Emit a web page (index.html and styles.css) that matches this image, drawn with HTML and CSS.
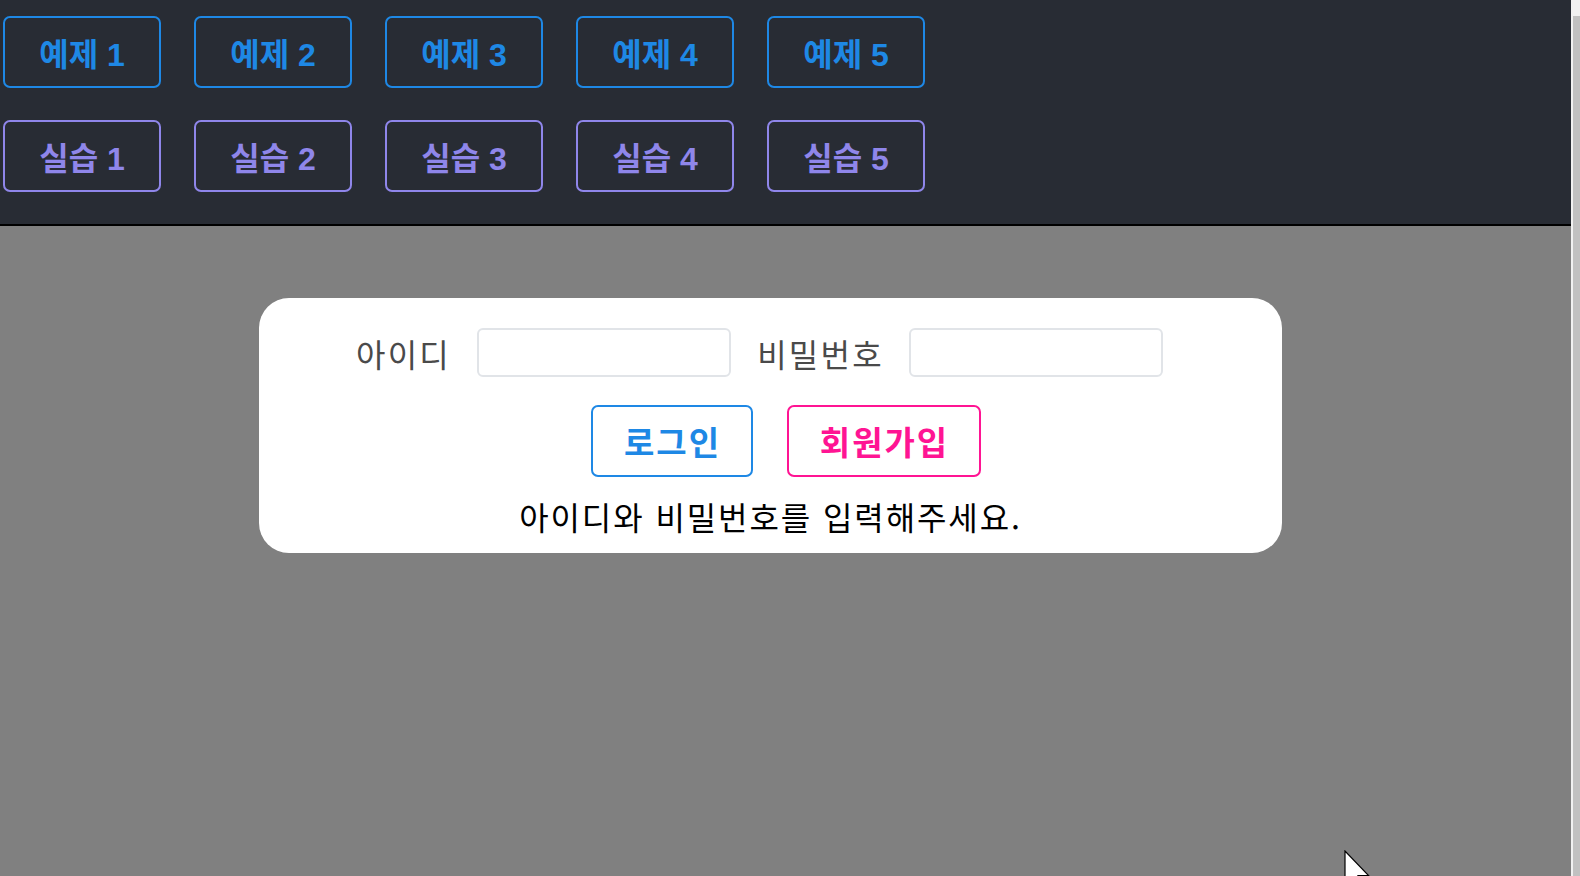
FILE: index.html
```html
<!DOCTYPE html>
<html lang="ko">
<head>
<meta charset="utf-8">
<title>로그인</title>
<link rel="stylesheet" href="styles.css">
</head>
<body>
<div class="page">
  <header class="header">
    <nav class="btn-grid">
      <button class="nav-btn ex">예제 1</button>
      <button class="nav-btn ex">예제 2</button>
      <button class="nav-btn ex">예제 3</button>
      <button class="nav-btn ex">예제 4</button>
      <button class="nav-btn ex">예제 5</button>
      <button class="nav-btn pr">실습 1</button>
      <button class="nav-btn pr">실습 2</button>
      <button class="nav-btn pr">실습 3</button>
      <button class="nav-btn pr">실습 4</button>
      <button class="nav-btn pr">실습 5</button>
    </nav>
  </header>
  <main class="main">
    <section class="card">
      <div class="field-row">
        <label class="field-label">아이디</label>
        <input class="field-input first" type="text">
        <label class="field-label">비밀번호</label>
        <input class="field-input second" type="password">
      </div>
      <div class="action-row">
        <button class="act-btn login">로그인</button>
        <button class="act-btn join">회원가입</button>
      </div>
      <p class="message">아이디와 비밀번호를 입력해주세요.</p>
    </section>
    <svg class="cursor" width="28" height="44" viewBox="0 0 14 22"><path d="M0.5 0.5 L0.5 17.5 L4.5 13.7 L7.2 20.3 L9.6 19.3 L7 12.8 L12.3 12.8 Z" fill="#fff" stroke="#000" stroke-width="0.6"/></svg>
  </main>
</div>
<div class="scrollbar"><div class="thumb"></div></div>
</body>
</html>
```
FILE: styles.css
```css
html, body {
  margin: 0;
  padding: 0;
  height: 100%;
}
body {
  display: flex;
  font-family: "Liberation Sans", "Noto Sans CJK KR", sans-serif;
  overflow: hidden;
}
.page {
  width: 1571px;
  display: flex;
  flex-direction: column;
  height: 876px;
  overflow: hidden;
}
.header {
  background: #282c34;
  padding: 16px 0 32px 3px;
  border-bottom: 2px solid #000;
}
.btn-grid {
  display: grid;
  grid-template-columns: repeat(5, 158px);
  grid-auto-rows: 72px;
  gap: 32px 33px;
}
.nav-btn {
  background: transparent;
  border: 2px solid;
  border-radius: 7px;
  font-family: "Liberation Sans", "Noto Sans CJK KR", sans-serif;
  font-weight: 700;
  font-size: 32px;
  padding: 0;
  margin: 0;
}
.nav-btn.ex {
  color: #1e88e5;
  border-color: #1e88e5;
}
.nav-btn.pr {
  color: #8f86ea;
  border-color: #8f86ea;
}
.main {
  flex: 1;
  background: #808080;
  position: relative;
  padding-top: 72px;
}
.card {
  background: #fff;
  width: 1023px;
  margin-left: 259px;
  border-radius: 30px;
  padding: 30px 0 17px;
  display: flex;
  flex-direction: column;
  align-items: center;
}
.field-row {
  display: flex;
  align-items: center;
  height: 49px;
}
.field-label {
  font-family: "Noto Sans CJK KR", sans-serif;
  font-size: 32px;
  color: #4a4a4a;
  letter-spacing: 2.3px;
}
.field-input {
  width: 254px;
  height: 49px;
  box-sizing: border-box;
  border: 2px solid #e1e4e8;
  border-radius: 6px;
  margin: 0;
}
.field-input.first {
  margin: 0 26px 0 26px;
}
.field-input.second {
  margin: 0 22px 0 25px;
}
.action-row {
  display: flex;
  margin-top: 28px;
  margin-left: -4px;
}
.act-btn {
  height: 72px;
  background: #fff;
  border: 2px solid;
  border-radius: 7px;
  font-family: "Noto Sans CJK KR", sans-serif;
  font-weight: 700;
  font-size: 33px;
  letter-spacing: 2px;
  text-indent: 2px;
  padding: 0;
  margin-left: 34px;
}
.act-btn.login {
  width: 162px;
  color: #1e88e5;
  border-color: #1e88e5;
}
.act-btn.join {
  width: 194px;
  color: #ff1493;
  border-color: #ff1493;
}
.message {
  margin: 19px 0 0;
  font-family: "Noto Sans CJK KR", sans-serif;
  font-size: 32px;
  letter-spacing: 1.9px;
  line-height: 40px;
  color: #000;
}
.cursor {
  position: absolute;
  left: 1344px;
  top: 624px;
}
.scrollbar {
  width: 9px;
  height: 876px;
  background: #f1f1f1;
  padding: 16px 0 0 2px;
  box-sizing: border-box;
  display: flex;
}
.thumb {
  flex: 1;
  background: #c1c1c1;
}
```
